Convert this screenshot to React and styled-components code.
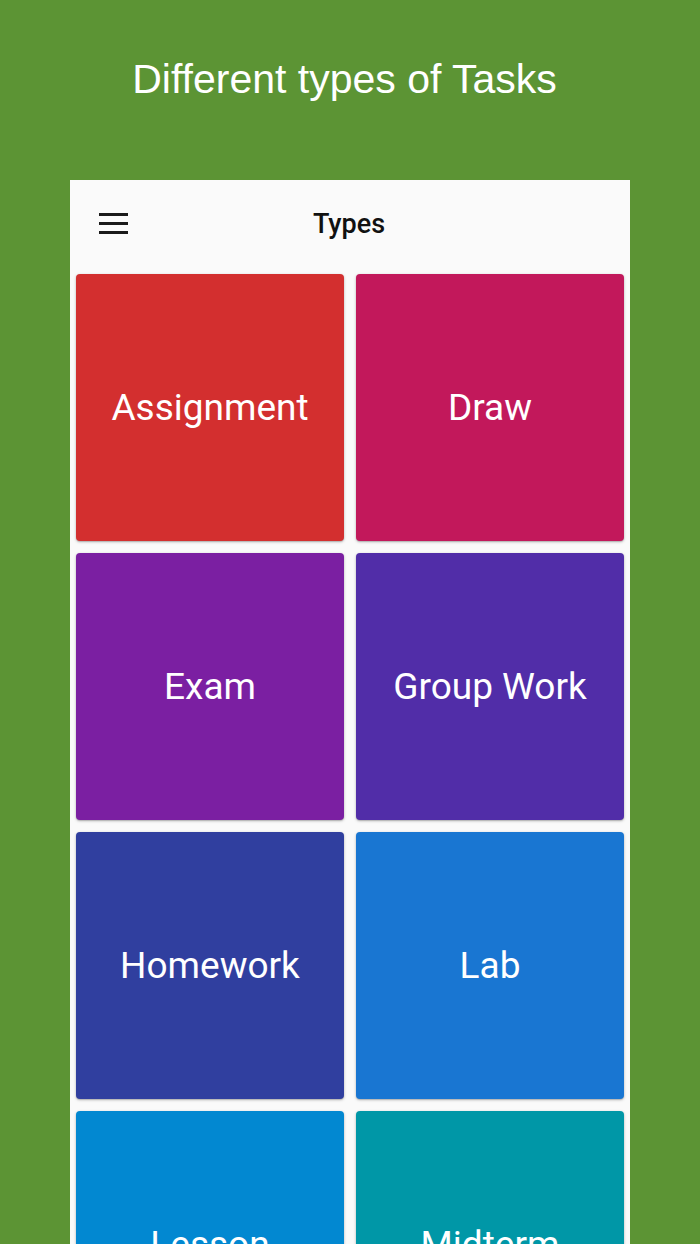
import React from "react";
import styled, { createGlobalStyle } from "styled-components";

const Global = createGlobalStyle`
  html, body { margin: 0; padding: 0; background: #5c9434; overflow: hidden; }
  body { width: 700px; height: 1244px; }
`;

const Page = styled.div`
  width: 700px;
  height: 1244px;
  background: #5c9434;
  display: flex;
  flex-direction: column;
  align-items: center;
  overflow: hidden;
`;

const Headline = styled.h1`
  margin: 0;
  flex-shrink: 0;
  height: 180px;
  box-sizing: border-box;
  padding: 56px 11px 0 0;
  font-family: "Liberation Sans", Arial, sans-serif;
  font-weight: 400;
  font-size: 41px;
  line-height: 46px;
  color: #ffffff;
  text-align: center;
`;

const Phone = styled.div`
  width: 560px;
  flex: 1;
  min-height: 0;
  background: #fafafa;
  display: flex;
  flex-direction: column;
  overflow: hidden;
`;

const AppBar = styled.div`
  flex-shrink: 0;
  height: 88px;
  display: flex;
  align-items: center;
  position: relative;
  background: #fafafa;
  padding-left: 29px;
  box-sizing: border-box;
`;

const MenuButton = styled.div`
  width: 29px;
  display: flex;
  flex-direction: column;
  gap: 6px;
  margin-top: -1px;
  & > span {
    display: block;
    height: 3px;
    background: #1a1a1a;
  }
`;

const Title = styled.div`
  position: absolute;
  left: 0;
  right: 0;
  top: 0;
  bottom: 0;
  display: flex;
  align-items: center;
  justify-content: center;
  font-family: Roboto, "Noto Sans", sans-serif;
  font-weight: 500;
  font-size: 27px;
  color: #111;
  pointer-events: none;
  padding-right: 2px;
`;

const Grid = styled.div`
  flex-shrink: 0;
  display: grid;
  grid-template-columns: repeat(2, 268px);
  grid-auto-rows: 267px;
  column-gap: 12px;
  row-gap: 12px;
  padding: 6px 6px 0;
`;

const Card = styled.div`
  background: ${(p) => p.$color};
  border-radius: 4px;
  box-shadow: 0 1px 3px rgba(0, 0, 0, 0.25), 0 1px 1px rgba(0, 0, 0, 0.12);
  display: flex;
  align-items: center;
  justify-content: center;
  font-family: Roboto, "Noto Sans", sans-serif;
  font-size: 37px;
  color: #ffffff;
`;

const types = [
  ["Assignment", "#d32f2f"],
  ["Draw", "#c2185b"],
  ["Exam", "#7b1fa2"],
  ["Group Work", "#512da8"],
  ["Homework", "#303f9f"],
  ["Lab", "#1976d2"],
  ["Lesson", "#0288d1"],
  ["Midterm", "#0097a7"],
];

export default function App() {
  return (
    <>
      <Global />
      <Page>
        <Headline>Different types of Tasks</Headline>
        <Phone>
          <AppBar>
            <MenuButton>
              <span />
              <span />
              <span />
            </MenuButton>
            <Title>Types</Title>
          </AppBar>
          <Grid>
            {types.map(([name, color]) => (
              <Card key={name} $color={color}>
                {name}
              </Card>
            ))}
          </Grid>
        </Phone>
      </Page>
    </>
  );
}
